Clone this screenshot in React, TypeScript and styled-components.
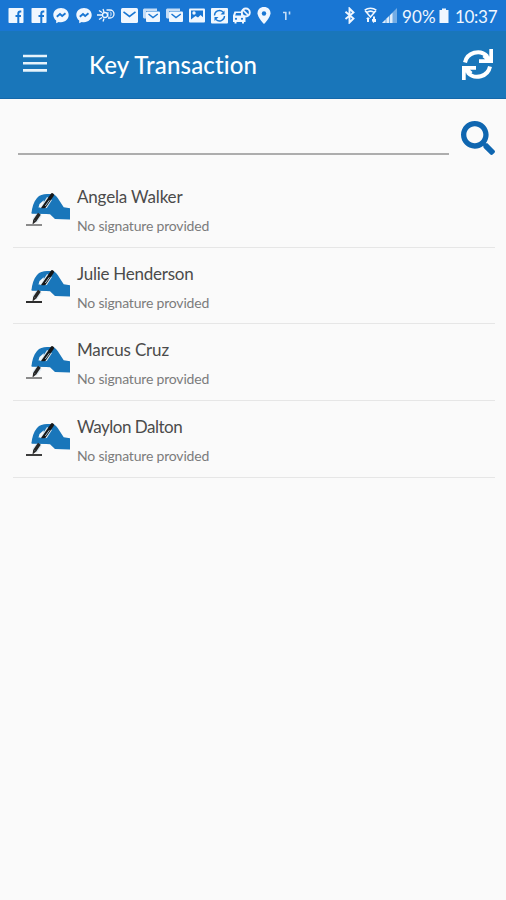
import React from 'react';
import styled, { createGlobalStyle } from 'styled-components';
import { FaSearch } from 'react-icons/fa';

const GlobalStyle = createGlobalStyle`
  * { box-sizing: border-box; }
  body { margin: 0; background: #fafafa; }
`;

const Screen = styled.div`
  width: 506px;
  height: 900px;
  overflow: hidden;
  background: #fafafa;
  font-family: Lato, 'Open Sans', sans-serif;
`;

const StatusBar = styled.header`
  height: 31px;
  display: flex;
  justify-content: space-between;
  background: #1976d3;
  color: #f0f7ff;
`;

const Notifications = styled.div`
  display: grid;
  grid-auto-flow: column;
  grid-auto-columns: 22.55px;
  justify-items: center;
  align-items: start;
  padding: 7px 0 0 5px;
  svg { display: block; }
`;

const Indicators = styled.div`
  display: flex;
  align-items: flex-start;
  padding: 7px 9px 0 0;
  svg { display: block; flex: none; }
`;

const StatusText = styled.span<{ $width: number; $spacing: number }>`
  width: ${(p) => p.$width}px;
  font-size: 17px;
  line-height: 19px;
  letter-spacing: ${(p) => p.$spacing}px;
  white-space: nowrap;
`;

const AppBar = styled.div`
  height: 68px;
  display: flex;
  align-items: center;
  padding: 0 13px 0 23px;
  background: #1976ba;
  border-bottom: 1px solid #1468aa;
  color: #fff;
`;

const IconButton = styled.button`
  display: block;
  padding: 0;
  border: 0;
  background: none;
  color: inherit;
  svg { display: block; }
`;

const MenuButton = styled(IconButton)`
  margin-bottom: 3px;
  color: #e6f3fb;
`;

const Title = styled.h1`
  flex: 1;
  margin: 1px 0 0 42px;
  font-size: 24px;
  line-height: 30px;
  font-weight: 500;
  letter-spacing: 0.15px;
`;

const SearchRow = styled.form`
  height: 72px;
  display: flex;
  align-items: flex-start;
  padding: 17px 11px 0 18px;
  gap: 12px;
  color: #0f66b0;
`;

const SearchInput = styled.input`
  flex: 1;
  height: 39px;
  padding: 0;
  border: 0;
  border-bottom: 2px solid #adadad;
  border-radius: 0;
  background: transparent;
  outline: 0;
  font: 17px Lato, sans-serif;
`;

const SearchButton = styled(IconButton)`
  margin-top: 5px;
`;

const List = styled.ul`
  margin: 0 11px 0 13px;
  padding: 0;
  list-style: none;
`;

const Row = styled.li`
  height: 76.7px;
  display: flex;
  border-bottom: 1px solid #e6e6e6;
  svg { margin: 19px 5px 0 12px; flex: none; }
`;

const Name = styled.div<{ $spacing: number }>`
  padding-top: 14px;
  font-size: 17px;
  line-height: 24px;
  color: #4b4b4b;
  letter-spacing: ${(p) => p.$spacing}px;
`;

const Note = styled.div`
  margin-top: 8px;
  font-size: 14px;
  line-height: 18px;
  color: #7c7c7c;
  letter-spacing: -0.19px;
`;

const Spacer = styled.span<{ $width: number }>`
  width: ${(p) => p.$width}px;
`;

const blue = '#1976d3';

const Facebook = () => (
  <svg width="16" height="17" viewBox="0 0 16 17">
    <rect x=".5" y="1" width="15" height="15" rx=".8" fill="currentColor" />
    <path fill="none" stroke={blue} strokeWidth="2" d="M13.300 4.500h-1c-1.500 0-2 .7-2 2V16M7.500 9H13" />
  </svg>
);

const Messenger = () => (
  <svg width="16" height="17" viewBox="0 0 16 17">
    <path fill="currentColor" d="M8 1c4.500 0 7.700 3.100 7.700 7s-3.200 7.200-7.700 7.200c-.8 0-1.600-.1-2.300-.3L3.200 16.300v-2.800C1.500 12.200.3 10.200.3 8 .3 4.100 3.500 1 8 1z" />
    <path fill="none" stroke={blue} strokeWidth="1.800" d="M3.800 9.800 7 7l2.200 2 3.300-2.700" />
  </svg>
);

const Comet = () => (
  <svg width="18" height="17" viewBox="0 0 18 17" fill="none" stroke="currentColor" strokeWidth="1.300">
    <path d="M9.500 3h3.500a4 4 0 0 1 0 8h-2M2 3.500l3 2M6 2l1 3M0 8h5M2 12.500l3-2M6 14.500l1-3" />
    <circle cx="8" cy="8" r="2.500" />
    <path strokeWidth=".9" d="M11 5v5M13 4.500c1.500 1 1.500 4 0 5" />
  </svg>
);

const Envelope = () => (
  <svg width="17" height="17" viewBox="0 0 17 17">
    <rect x="0" y="1" width="17" height="15" rx="1.500" fill="currentColor" />
    <path fill="none" stroke={blue} strokeWidth="1.600" d="M2.500 4.800 8.500 9.500l6-4.700" />
  </svg>
);

const Envelopes = () => (
  <svg width="17" height="17" viewBox="0 0 17 17">
    <path fill="currentColor" opacity=".8" d="M1 1.500h13V4H3v7.500H1L0 10.500v-8z" />
    <rect x="3" y="4.500" width="14" height="10.500" rx="1" fill="currentColor" />
    <path fill="none" stroke={blue} strokeWidth="1.500" d="M5.500 7 10 10.500 14.800 7" />
  </svg>
);

const Picture = () => (
  <svg width="16" height="17" viewBox="0 0 16 17">
    <rect x="0" y="1.500" width="16" height="14" rx="1" fill="currentColor" />
    <path fill={blue} d="M2 3.500h12v6.700L11.500 8 9 10.500 6.500 9 2 12.500z" />
    <circle cx="5" cy="6" r="1.700" fill="currentColor" />
  </svg>
);

const SyncTile = () => (
  <svg width="17" height="17" viewBox="0 0 17 17">
    <rect x="0" y="1" width="17" height="15.500" rx="1" fill="currentColor" />
    <path fill="none" stroke={blue} strokeWidth="1.400" d="M3.500 8.500a5 5 0 0 1 8.500-3.500M13.500 9a5 5 0 0 1-8.500 3.500" />
    <path fill={blue} d="M13.500 3.500v4h-4zM3.500 14v-4h4z" />
  </svg>
);

const Traffic = () => (
  <svg width="18" height="17" viewBox="0 0 18 17">
    <path fill="currentColor" d="M0 8.500 1.500 4.500H9v3l3.500 3V15H11v1.500H9V15H3.500v1.500h-2V15H0z" />
    <path fill={blue} d="m3 6-.8 2.500H8V6z" />
    <circle cx="3" cy="11.800" r="1.100" fill={blue} />
    <circle cx="9" cy="11.800" r="1.100" fill={blue} />
    <circle cx="12.800" cy="5.500" r="4" fill={blue} stroke="currentColor" strokeWidth="1.900" />
    <path stroke="currentColor" strokeWidth="1.700" d="m10 3 5.500 5.500" />
  </svg>
);

const Pin = () => (
  <svg width="14" height="17" viewBox="0 0 14 17">
    <path fill="currentColor" d="M7 0c4 0 6.500 2.700 6.500 6.200C13.500 10.200 7 17 7 17S.5 10.200.5 6.200C.5 2.700 3 0 7 0z" />
    <circle cx="7" cy="6.500" r="2.200" fill={blue} />
  </svg>
);

const Mark = () => (
  <svg width="12" height="17" viewBox="0 0 12 17">
    <path fill="none" stroke="currentColor" opacity=".8" strokeWidth="1.600" d="M2 5.500h3.500M4.800 5v8M8.500 4.500v3" />
  </svg>
);

const Bluetooth = () => (
  <svg width="12" height="17" viewBox="0 0 12 17">
    <path fill="none" stroke="currentColor" strokeWidth="1.900" d="m1.500 4.800 8 6.700-4 4V1.500l4 4-8 6.500" />
  </svg>
);

const Wifi = () => (
  <svg width="13" height="17" viewBox="0 0 13 17" fill="none" stroke="currentColor" strokeWidth="1.500">
    <path d="M.7 3.200C4 .6 9 .6 12.300 3.200M2.700 5.700c2.200-1.800 5.400-1.800 7.600 0M1 3.500l5.500 6.500L12 3.500" />
    <path fill="currentColor" stroke="none" d="m2 12 2-2 2 2H5v3H3v-3zM8 12h1V9.500h2V12h1v3h-1.500L9.500 16 8 14z" />
  </svg>
);

const Signal = () => (
  <svg width="15" height="17" viewBox="0 0 15 17" fill="currentColor">
    <path opacity=".42" d="M15 1v15H0z" />
    <path d="M3.500 12.500V16H0zM4.500 11.500l2.500-2.300V16H4.500zM8 8.200l2.500-2.500V16H8z" opacity=".85" />
  </svg>
);

const Battery = () => (
  <svg width="10" height="17" viewBox="0 0 10 17" fill="currentColor">
    <path d="M3 1.500h4V3h2.500v13H.5V3H3z" />
  </svg>
);

const Menu = () => (
  <svg width="24" height="18" viewBox="0 0 24 18">
    <path stroke="currentColor" strokeWidth="2.600" d="M0 2h24M0 9.200h24M0 16.400h24" />
  </svg>
);

const Refresh = () => (
  <svg width="31" height="31" viewBox="0 0 31 31" fill="none" stroke="currentColor">
    <path strokeWidth="4" d="M3 13.500C5 3.500 18-.5 25.500 7.500M28 17.500C26 27.500 13 31.500 5.500 23.500" />
    <path fill="currentColor" stroke="none" d="M27.300 0H31v14H17v-3.700h6L20.500 8l3-3.500 3.800 3zM3.700 31H0V17h14v3.700H8l2.500 2.300-3 3.500-3.800-3z" />
  </svg>
);

const SigningHand = ({ line }: { line: string }) => (
  <svg width="47" height="42" viewBox="0 0 47 42">
    <path fill="#1976ba" d="M6.500 23C7 17.500 8.500 12 12 8c2.500-3 6-4 10-4h6.500c1.500.8 3 2.500 4.200 4l6 9.200 6.300 1V29.500L30 29l-5-4.800z" />
    <path fill="#f4f8fa" d="m13.500 17.500 1-3.500 4.200-3.800.3 7.300z" />
    <path stroke="#dce9f1" strokeWidth="5.800" d="m16.500 21 8-12.500M9.500 31l5-7" />
    <path stroke="#161616" strokeWidth="3.600" strokeLinecap="round" d="M17.500 19 27.200 5" />
    <path stroke="#9fc1d6" strokeWidth="1" d="m20.300 16 4-5.700" />
    <path fill="#1976ba" d="M8 18.500c3-.8 6-.7 9.500-.2l5.500-.3 2.500 3.500-2.500 2.300H6.500z" />
    <path stroke="#262626" strokeWidth="3.400" d="m9.800 30.500 4.600-6.700" />
    <path fill="#262626" d="m7.500 34.500.7-5 3.100 2z" />
    <path stroke={line} strokeWidth="1.900" d="M1 35h16" />
  </svg>
);

const people = [
  { name: 'Angela Walker', spacing: -0.17, line: '#858585' },
  { name: 'Julie Henderson', spacing: -0.25, line: '#222' },
  { name: 'Marcus Cruz', spacing: -0.17, line: '#858585' },
  { name: 'Waylon Dalton', spacing: -0.48, line: '#333' },
];

export default function App() {
  return (
    <Screen>
      <GlobalStyle />
      <StatusBar>
        <Notifications>
          <Facebook />
          <Facebook />
          <Messenger />
          <Messenger />
          <Comet />
          <Envelope />
          <Envelopes />
          <Envelopes />
          <Picture />
          <SyncTile />
          <Traffic />
          <Pin />
          <Mark />
        </Notifications>
        <Indicators>
          <Bluetooth />
          <Spacer $width={8} />
          <Wifi />
          <Spacer $width={5} />
          <Signal />
          <Spacer $width={5} />
          <StatusText $width={37} $spacing={0.1}>90%</StatusText>
          <Battery />
          <Spacer $width={6} />
          <StatusText $width={42} $spacing={-0.3}>10:37</StatusText>
        </Indicators>
      </StatusBar>
      <AppBar>
        <MenuButton aria-label="Menu"><Menu /></MenuButton>
        <Title>Key Transaction</Title>
        <IconButton aria-label="Refresh"><Refresh /></IconButton>
      </AppBar>
      <SearchRow>
        <SearchInput aria-label="Search" />
        <SearchButton type="button" aria-label="Search"><FaSearch size={34} /></SearchButton>
      </SearchRow>
      <List>
        {people.map((p) => (
          <Row key={p.name}>
            <SigningHand line={p.line} />
            <div>
              <Name $spacing={p.spacing}>{p.name}</Name>
              <Note>No signature provided</Note>
            </div>
          </Row>
        ))}
      </List>
    </Screen>
  );
}
